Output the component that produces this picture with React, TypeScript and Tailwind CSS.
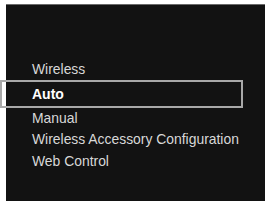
export default function App() {
  const items = [
    { label: "Manual", h: "h-[21px]" },
    { label: "Wireless Accessory Configuration", h: "h-[21px]" },
    { label: "Web Control", h: "h-[22px]" },
  ];

  return (
    <div className="w-[268px] h-[201px] bg-white overflow-hidden font-['Liberation_Sans',Arial,sans-serif]">
      <div className="ml-[6px] mt-[4px] w-[259px] h-[197px] bg-[#121212] border-t border-[#6a6a6a] pt-[53px]">
        <div className="h-[22px] flex items-center pl-[26px] text-[13.9px] text-[#d8d8d8]">
          Wireless
        </div>
        {/* selected row, box runs past the left edge of the screen */}
        <div className="-ml-[6px] w-[243px] h-[28px] border-2 border-[#a8a8a8] flex items-center pl-[30px] text-[14px] font-bold text-white">
          Auto
        </div>
        {items.map((item) => (
          <div
            key={item.label}
            className={`${item.h} flex items-center pl-[26px] text-[13.9px] text-[#d8d8d8] whitespace-nowrap`}
          >
            {item.label}
          </div>
        ))}
      </div>
    </div>
  );
}
